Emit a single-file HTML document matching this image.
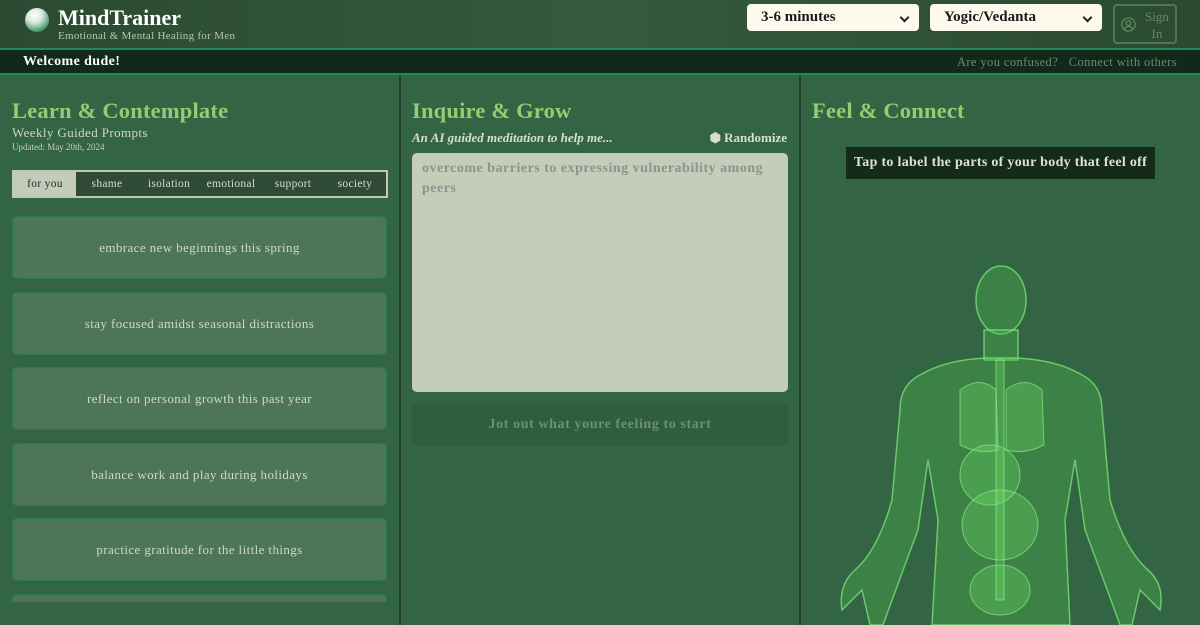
<!DOCTYPE html>
<html><head><style>
*{margin:0;padding:0;box-sizing:border-box}
body{width:1200px;height:625px;overflow:hidden;background:#326343;font-family:"Liberation Serif",serif;position:relative}
.hdr{position:absolute;left:0;top:0;width:1200px;height:48px;background:linear-gradient(90deg,#2b4a31,#355a3d 50%,#2b4a31)}
.nav{position:absolute;left:0;top:48px;width:1200px;height:27px;background:#10291a;border-top:2px solid #1f8a58;border-bottom:2px solid #1f8a58}
.col{position:absolute;top:75px;height:550px;background:#336444}
.sel{position:absolute;top:4px;height:27px;background:#fdf9ec;border-radius:4px;font-weight:bold;font-size:15px;color:#1a1a1a;padding:5px 0 0 14px}
.sel:after{content:"";position:absolute;right:11px;top:10px;width:5px;height:5px;border-right:2px solid #222;border-bottom:2px solid #222;transform:rotate(45deg)}
h2{position:absolute;color:#93cc72;font-size:22.5px;font-weight:bold;letter-spacing:.2px}
.card{position:absolute;left:12px;width:375px;height:63px;background:#4d7657;border:1px solid #2a7a4d;border-radius:5px;color:#cfd8c6;font-size:13px;text-align:center;line-height:61px;letter-spacing:.4px}
.tabs{position:absolute;left:12px;top:170px;width:376px;height:28px;border:2px solid #c0c8b8;background:#2f4a35;display:flex;font-size:11.5px;color:#d8dccf;letter-spacing:.3px}
.tabs div{flex:1;text-align:center;line-height:24px}
.tabs div:first-child{background:#c3ccbb;color:#1e2a20}
</style></head><body>
<div class="hdr"></div>
<div style="position:absolute;left:25px;top:8px;width:24px;height:24px;border-radius:50%;background:radial-gradient(circle at 40% 30%,#fff,#d8e6dc 35%,#2f8a5a 80%,#1c5a38)"></div>
<div style="position:absolute;left:58px;top:5px;font-size:22px;font-weight:bold;color:#fff">MindTrainer</div>
<div style="position:absolute;left:58px;top:30px;font-size:11px;color:#b8c4b8;letter-spacing:.3px">Emotional &amp; Mental Healing for Men</div>
<div class="sel" style="left:747px;width:172px">3-6 minutes</div>
<div class="sel" style="left:930px;width:172px">Yogic/Vedanta</div>
<div style="position:absolute;left:1113px;top:4px;width:64px;height:40px;border:2px solid #4a7a4e;border-radius:4px;color:#5f8c60;font-size:13px">
<svg style="position:absolute;left:6px;top:11px" width="15" height="15" viewBox="0 0 16 16" fill="none" stroke="#5f8c60" stroke-width="1.3"><circle cx="8" cy="8" r="7"/><circle cx="8" cy="6.5" r="2.5"/><path d="M3.5 13c1-2 2.5-3 4.5-3s3.5 1 4.5 3"/></svg>
<div style="position:absolute;left:30px;top:2px;line-height:17px;text-align:center">Sign<br>In</div></div>
<div class="nav"></div>
<div style="position:absolute;left:23px;top:54px;color:#fff;font-weight:bold;font-size:14px;letter-spacing:.4px">Welcome dude!</div>
<div style="position:absolute;right:23px;top:55px;color:#6f8a6f;font-size:12.5px;letter-spacing:.4px">Are you confused? &nbsp;&nbsp;Connect with others</div>

<div class="col" style="left:0;width:401px;border-right:2px solid #1f3d27"></div>
<div class="col" style="left:401px;width:400px;border-right:2px solid #1f3d27"></div>
<div class="col" style="left:801px;width:399px"></div>

<h2 style="left:12px;top:98px">Learn &amp; Contemplate</h2>
<div style="position:absolute;left:12px;top:125px;font-size:13px;color:#d0d8c8;letter-spacing:.4px">Weekly Guided Prompts</div>
<div style="position:absolute;left:12px;top:142px;font-size:9px;color:#c8d0c0">Updated: May 20th, 2024</div>
<div class="tabs"><div>for you</div><div>shame</div><div>isolation</div><div>emotional</div><div>support</div><div>society</div></div>
<div class="card" style="top:216px">embrace new beginnings this spring</div>
<div class="card" style="top:292px">stay focused amidst seasonal distractions</div>
<div class="card" style="top:367px">reflect on personal growth this past year</div>
<div class="card" style="top:443px">balance work and play during holidays</div>
<div class="card" style="top:518px">practice gratitude for the little things</div>
<div class="card" style="top:594px;height:8px;border-bottom:none;border-radius:5px 5px 0 0"></div>

<h2 style="left:412px;top:98px">Inquire &amp; Grow</h2>
<div style="position:absolute;left:412px;top:130px;font-size:13px;font-style:italic;font-weight:bold;color:#d8dfcf">An AI guided meditation to help me...</div>
<div style="position:absolute;right:413px;top:130px;font-size:13px;font-weight:bold;color:#d8dfcf">⬢ Randomize</div>
<div style="position:absolute;left:412px;top:153px;width:376px;height:239px;background:#c4cdba;border-radius:5px;padding:6px 10px;font-size:14px;font-weight:bold;color:#8a9590;line-height:20px;letter-spacing:.5px">overcome barriers to expressing vulnerability among peers</div>
<div style="position:absolute;left:412px;top:404px;width:376px;height:42px;background:#2f5e3d;border-radius:5px;text-align:center;line-height:42px;font-size:14px;font-weight:bold;color:#6d8f72;letter-spacing:.6px">Jot out what youre feeling to start</div>

<h2 style="left:812px;top:98px">Feel &amp; Connect</h2>
<div style="position:absolute;left:846px;top:147px;width:309px;height:32px;background:#142a1a;color:#dde3d4;font-weight:bold;font-size:14px;text-align:center;line-height:32px;letter-spacing:.3px">Tap to label the parts of your body that feel off</div>

<svg style="position:absolute;left:820px;top:250px" width="360" height="375" viewBox="0 0 360 375">
<g fill="#4dbb4a" fill-opacity=".35" stroke="#7ef07a" stroke-opacity=".7" stroke-width="1.5">
<ellipse cx="181" cy="50" rx="25" ry="34"/>
<rect x="164" y="80" width="34" height="30"/>
<path d="M100 125 Q125 110 165 108 L197 108 Q237 110 262 125 Q282 135 282 160 L290 250 Q305 300 328 320 Q345 335 340 360 L320 340 L312 375 L300 375 Q280 320 265 280 L255 210 L245 270 L250 375 L112 375 L118 270 L108 210 L98 280 Q83 320 63 375 L50 375 L42 340 L22 360 Q18 335 35 320 Q58 300 72 250 L80 160 Q80 135 100 125Z"/>
</g>
<g fill="#6fe06a" fill-opacity=".3" stroke="#9af590" stroke-opacity=".6" stroke-width="1">
<path d="M140 140 Q160 125 176 140 L178 200 Q160 205 140 195Z"/>
<path d="M186 140 Q205 125 222 140 L224 195 Q205 205 186 200Z"/>
<ellipse cx="170" cy="225" rx="30" ry="30"/>
<ellipse cx="180" cy="275" rx="38" ry="35"/>
<ellipse cx="180" cy="340" rx="30" ry="25"/>
<rect x="176" y="110" width="8" height="240"/>
</g>
</svg>
</body></html>
